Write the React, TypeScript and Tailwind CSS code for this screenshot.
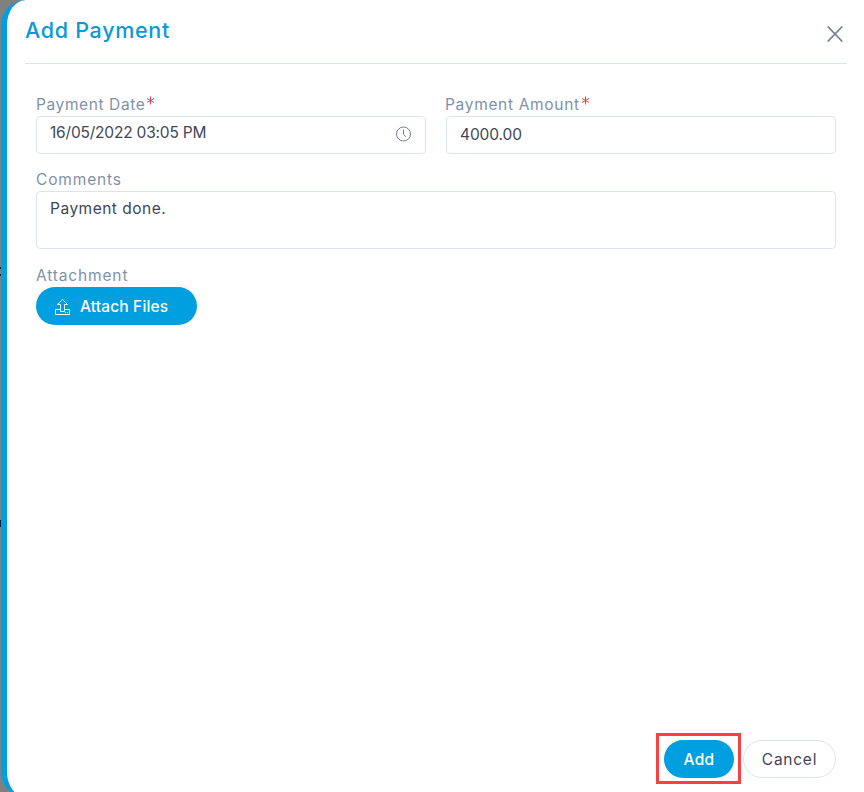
import React from "react";

function Required() {
  return (
    <svg className="mb-[8px] ml-[1px] h-[9px] w-[8px]" viewBox="0 0 8 9" fill="none" stroke="#f44336" strokeWidth="1">
      <path d="M4.5 .5v8M1 2.5l7 4M8 2.5l-7 4" />
    </svg>
  );
}

function Label({ children, required }: { children: React.ReactNode; required?: boolean }) {
  return (
    <div className="flex h-[23px] items-center whitespace-nowrap text-[15.5px] text-[#8192a8]">
      {children}
      {required && <Required />}
    </div>
  );
}

export default function App() {
  return (
    <div className="relative h-[792px] w-[864px] overflow-hidden bg-[#808080] pl-px font-['Inter',sans-serif] font-normal">
      <i className="absolute left-0 top-[267px] h-[2px] w-px bg-[#202020]" />
      <i className="absolute left-0 top-[274px] h-[2px] w-px bg-[#202020]" />
      <i className="absolute left-0 top-[520px] h-[7px] w-px bg-[#17223b]" />
      <div className="flex h-[797px] flex-col rounded-l-[25px] border-l-[6px] border-[#009fdf] bg-white pb-[12px] pl-[18px] pr-[17px]">
        <header className="flex h-16 shrink-0 items-start justify-between border-b border-[#dce3ef] pr-1">
          <h1 className="mt-4 whitespace-nowrap text-[21.5px] font-medium leading-7 text-[#0c98d7]">
            <span className="tracking-[0.7px]">Add Payment</span>
          </h1>
          <svg className="mt-[26px] h-4 w-4" viewBox="0 0 16 16" fill="none" stroke="#718096" strokeWidth="1.7">
            <path d="M.7.5l14.6 15M15.3.5L.7 15.5" />
          </svg>
        </header>
        <main className="flex flex-1 flex-col pl-[11px] pr-[11px] pt-[29px]">
          <div className="grid grid-cols-2 gap-5">
            <div>
              <Label required><span className="tracking-[0.6px]">Payment Date</span></Label>
              <div className="flex h-[38px] items-center justify-between rounded-[4px] border border-[#dce3ef] pl-[13px] pr-[14px] text-[15.5px] text-[#3f4658]">
                <span className="mb-1 tracking-[-0.2px]">16/05/2022 03:05 PM</span>
                <svg className="mb-[2px] h-4 w-4" viewBox="0 0 16 16" fill="none" stroke="#718096" strokeWidth="1">
                  <circle cx="8.5" cy="8" r="7" />
                  <path d="M8.5 3.5v5l2.3 2.2" />
                </svg>
              </div>
            </div>
            <div>
              <Label required><span className="ml-[-1px] tracking-[0.68px]">Payment Amount</span></Label>
              <div className="flex h-[38px] items-center rounded-[4px] border border-[#dce3ef] pl-[13px] text-[15.5px] text-[#3f4658]">
                <span className="tracking-[-0.1px]">4000.00</span>
              </div>
            </div>
          </div>
          <div className="mt-[14px]">
            <Label><span className="tracking-[0.85px]">Comments</span></Label>
            <div className="h-[58px] rounded-[4px] border border-[#dce3ef] pl-[13px] pt-[5px] text-[15.5px] leading-6 text-[#3f4658]">
              <span className="tracking-[0.5px]">Payment done.</span>
            </div>
          </div>
          <div className="mt-[15px]">
            <Label><span className="tracking-[0.85px]">Attachment</span></Label>
            <button className="flex h-[38px] w-[161px] items-center rounded-full bg-[#009fdf] pl-[19px] text-[15.5px] font-medium text-white">
              <svg className="mr-[10px] mt-[2px] h-4 w-[15px]" viewBox="0 0 15 16" fill="none" stroke="white" strokeWidth="1">
                <path d="M5.5 12.5v-7h-3l5-5 5 5h-3v7zM5.5 10.5h-5v5h14v-5h-5M10 13.5h1M12 13.5h1" />
              </svg>
              <span className="mt-[2px] whitespace-nowrap tracking-[0.15px]">Attach Files</span>
            </button>
          </div>
          <footer className="mt-auto flex h-[45px] justify-end gap-[9px]">
            <div className="relative">
              <button className="h-[38px] w-[70px] rounded-full bg-[#009fdf] pt-[2px] text-[15.5px] font-medium tracking-[0.4px] text-white">Add</button>
              <div className="absolute left-[-8px] top-[-7px] h-[51px] w-[85px] border-[3px] border-[#f94144]" />
            </div>
            <button className="h-[38px] w-[93px] rounded-full border border-[#dce3ef] pt-[2px] text-[15.5px] tracking-[0.75px] text-[#3f4658]">Cancel</button>
          </footer>
        </main>
      </div>
    </div>
  );
}
